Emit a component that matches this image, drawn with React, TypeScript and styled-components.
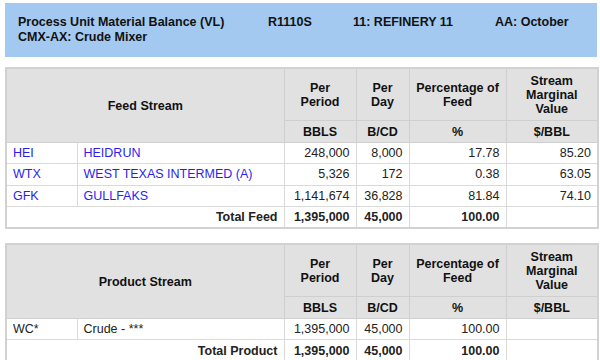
import React from "react";
import styled, { createGlobalStyle } from "styled-components";

const Global = createGlobalStyle`
  html, body { margin: 0; padding: 0; background: #ffffff; }
  body { font-family: "Liberation Sans", Arial, sans-serif; color: #111; }
`;

const Page = styled.div`
  width: 592px;
  margin: 3px 0 0 5px;
  display: flex;
  flex-direction: column;
`;

const Banner = styled.header`
  background: #a3c9f0;
  height: 54px;
  box-sizing: border-box;
  padding: 12px 0 0 13px;
  display: grid;
  grid-template-columns: 250px 85px 142px 1fr;
  grid-auto-rows: 15px;
  font-weight: bold;
  font-size: 12.5px;
  line-height: 15px;
  color: #111;
`;

const BannerItem = styled.div`
  white-space: nowrap;
`;

const Table = styled.table<{ $top: number }>`
  margin-top: ${(p) => p.$top}px;
  width: 592px;
  table-layout: fixed;
  border-collapse: collapse;
  border: 2px solid #d2d2d2;
  font-size: 12.5px;
  line-height: 14px;
`;

const HeadCell = styled.th<{ $h?: number }>`
  background: #e1e1e1;
  border: 1px solid #cfcfcf;
  font-weight: bold;
  text-align: center;
  vertical-align: middle;
  padding: 0 4px;
  height: ${(p) => p.$h ?? 21}px;
  color: #111;
`;

const Cell = styled.td<{ $align?: "left" | "right"; $bold?: boolean; $link?: boolean }>`
  border: 1px solid #dadada;
  padding: 0 6px;
  height: 20.3px;
  text-align: ${(p) => p.$align ?? "right"};
  font-weight: ${(p) => (p.$bold ? "bold" : "normal")};
  color: ${(p) => (p.$link ? "#2b1df0" : "#222")};
  white-space: nowrap;
  vertical-align: middle;
`;

type Row = { code: string; name: string; period: string; day: string; pct: string; smv: string; link?: boolean };

const feed: Row[] = [
  { code: "HEI", name: "HEIDRUN", period: "248,000", day: "8,000", pct: "17.78", smv: "85.20", link: true },
  { code: "WTX", name: "WEST TEXAS INTERMED (A)", period: "5,326", day: "172", pct: "0.38", smv: "63.05", link: true },
  { code: "GFK", name: "GULLFAKS", period: "1,141,674", day: "36,828", pct: "81.84", smv: "74.10", link: true },
];

const product: Row[] = [
  { code: "WC*", name: "Crude - ***", period: "1,395,000", day: "45,000", pct: "100.00", smv: "" },
];

const Cols = () => (
  <colgroup>
    <col style={{ width: 71 }} />
    <col style={{ width: 207 }} />
    <col style={{ width: 72 }} />
    <col style={{ width: 53 }} />
    <col style={{ width: 97 }} />
    <col style={{ width: 92 }} />
  </colgroup>
);

const StreamTable: React.FC<{ title: string; rows: Row[]; total: string; top: number }> = ({ title, rows, total, top }) => (
  <Table $top={top}>
    <Cols />
    <thead>
      <tr>
        <HeadCell colSpan={2} rowSpan={2}>{title}</HeadCell>
        <HeadCell $h={51}>Per<br />Period</HeadCell>
        <HeadCell $h={51}>Per<br />Day</HeadCell>
        <HeadCell $h={51}>Percentage of<br />Feed</HeadCell>
        <HeadCell $h={51}>Stream<br />Marginal<br />Value</HeadCell>
      </tr>
      <tr>
        <HeadCell>BBLS</HeadCell>
        <HeadCell>B/CD</HeadCell>
        <HeadCell>%</HeadCell>
        <HeadCell>$/BBL</HeadCell>
      </tr>
    </thead>
    <tbody>
      {rows.map((r) => (
        <tr key={r.code}>
          <Cell $align="left" $link={r.link}>{r.code}</Cell>
          <Cell $align="left" $link={r.link}>{r.name}</Cell>
          <Cell>{r.period}</Cell>
          <Cell>{r.day}</Cell>
          <Cell>{r.pct}</Cell>
          <Cell>{r.smv}</Cell>
        </tr>
      ))}
      <tr>
        <Cell colSpan={2} $bold>{total}</Cell>
        <Cell $bold>1,395,000</Cell>
        <Cell $bold>45,000</Cell>
        <Cell $bold>100.00</Cell>
        <Cell />
      </tr>
    </tbody>
  </Table>
);

export default function App() {
  return (
    <>
      <Global />
      <Page>
        <Banner>
          <BannerItem>Process Unit Material Balance (VL)</BannerItem>
          <BannerItem>R1110S</BannerItem>
          <BannerItem>11: REFINERY 11</BannerItem>
          <BannerItem>AA: October</BannerItem>
          <BannerItem>CMX-AX: Crude Mixer</BannerItem>
        </Banner>
        <StreamTable title="Feed Stream" rows={feed} total="Total Feed" top={10} />
        <StreamTable title="Product Stream" rows={product} total="Total Product" top={14} />
      </Page>
    </>
  );
}
